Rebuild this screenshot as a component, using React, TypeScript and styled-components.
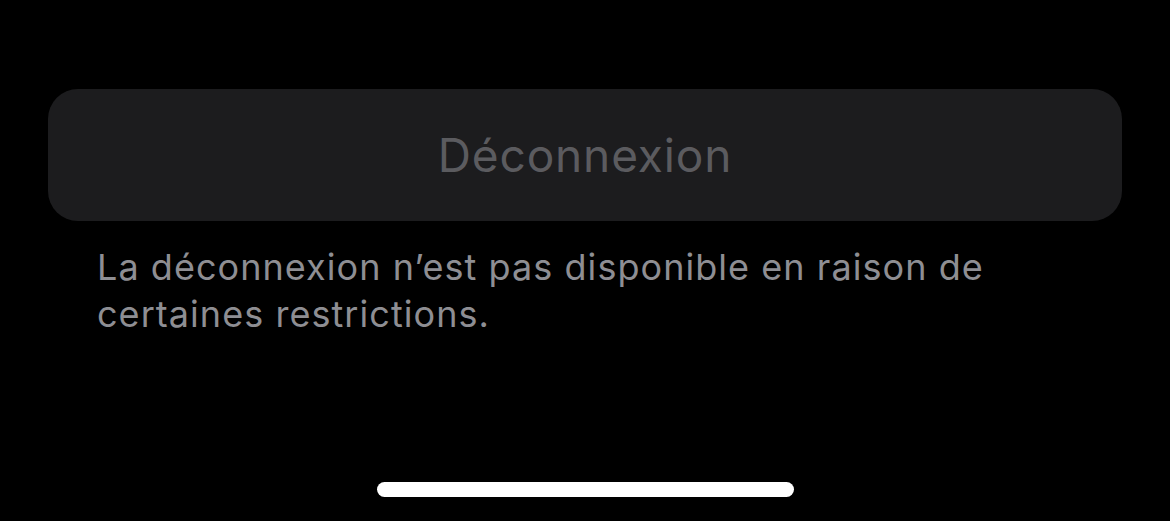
import * as React from 'react';
import styled, { createGlobalStyle } from 'styled-components';

const Global = createGlobalStyle`
  html, body {
    margin: 0;
    padding: 0;
    background: #000;
  }
  body {
    font-family: Inter, "Liberation Sans", sans-serif;
    -webkit-font-smoothing: antialiased;
  }
`;

const Screen = styled.div`
  width: 1170px;
  height: 521px;
  box-sizing: border-box;
  padding: 89px 48px 24px;
  display: flex;
  flex-direction: column;
  background: #000;
`;

const Button = styled.div`
  height: 132px;
  border-radius: 30px;
  background: #1c1c1e;
  display: flex;
  align-items: center;
  justify-content: center;
  color: #5b5b5f;
  font-size: 46px;
  letter-spacing: 0.85px;
`;

const Footnote = styled.p`
  margin: 23px 0 0 49px;
  font-size: 36px;
  line-height: 47px;
  color: #8e8e93;
  letter-spacing: 1.05px;
`;

const HomeBar = styled.div`
  margin: auto auto 0;
  width: 417px;
  height: 15px;
  border-radius: 8px;
  background: #fff;
`;

export default function App() {
  return (
    <>
      <Global />
      <Screen>
        <Button>Déconnexion</Button>
        <Footnote>
          La déconnexion n’est pas disponible en raison de
          <br />
          certaines restrictions.
        </Footnote>
        <HomeBar />
      </Screen>
    </>
  );
}
